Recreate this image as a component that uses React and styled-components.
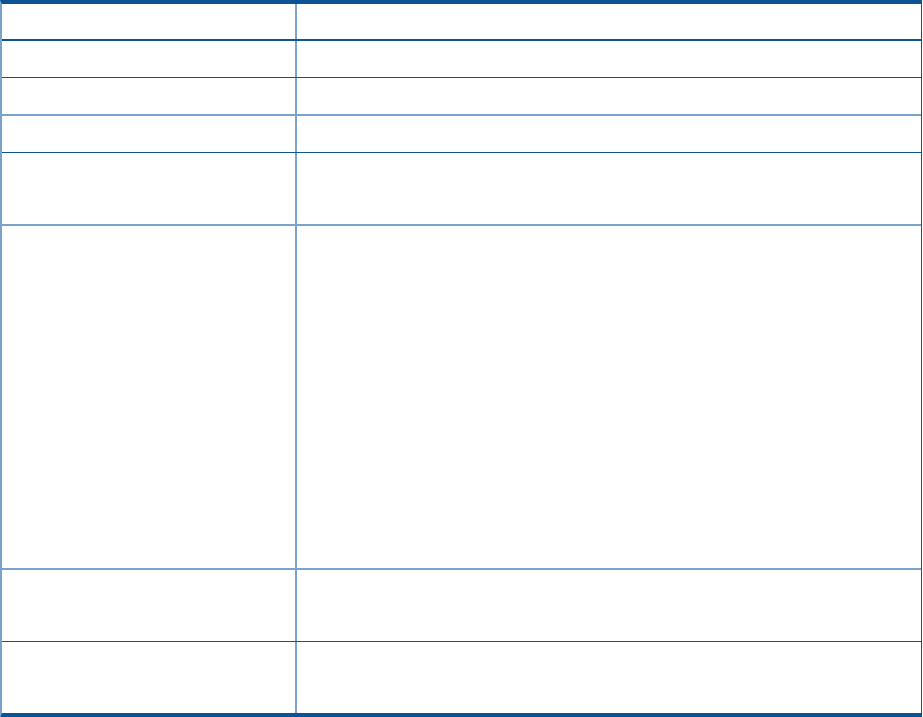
import React from 'react'
import styled, { createGlobalStyle } from 'styled-components'

const dark = '#0b5392'
const light = '#7aa2cb'

const GlobalStyle = createGlobalStyle`
  html, body {
    margin: 0;
    padding: 0;
    background: #ffffff;
    font-family: "Liberation Sans", Arial, sans-serif;
  }
`

const Table = styled.div`
  width: 922px;
  display: flex;
  flex-direction: column;
  box-sizing: border-box;
  border-top: 4px solid ${dark};
  border-bottom: 5px solid ${dark};
  border-left: 2px solid ${light};
  border-right: 1px solid ${dark};
`

const Row = styled.div`
  display: grid;
  grid-template-columns: 293px 1fr;
  height: ${(props) => props.h}px;
  box-sizing: border-box;
  border-bottom: ${(props) => props.line || 'none'};
`

const Cell = styled.div`
  box-sizing: border-box;
  padding: 6px 8px;
  font-size: 13px;
  color: #000;
  & + & {
    border-left: 2px solid ${light};
  }
`

const rows = [
  { h: 37, line: `2px solid ${dark}` },
  { h: 37, line: `1px solid ${dark}` },
  { h: 38, line: `2px solid ${light}` },
  { h: 37, line: `1px solid ${dark}` },
  { h: 73, line: `2px solid ${light}` },
  { h: 344, line: `2px solid ${light}` },
  { h: 72, line: `1px solid ${dark}` },
  { h: 71 },
]

export default function App() {
  return (
    <>
      <GlobalStyle />
      <Table>
        {rows.map((row, idx) => (
          <Row key={String(idx)} h={row.h} line={row.line}>
            <Cell />
            <Cell />
          </Row>
        ))}
      </Table>
    </>
  )
}
